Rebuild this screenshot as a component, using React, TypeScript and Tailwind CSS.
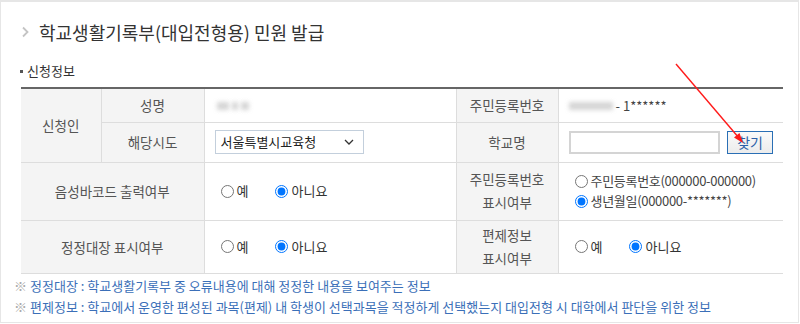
import React from 'react';

const labelCls = 'bg-[#f4f4f4] border border-[#dddddd] text-center text-[#555] font-normal text-[13.5px]';
const valueCls = 'border border-[#dddddd] text-left px-[10px] text-[#333]';

const Radio: React.FC<{ name: string; label: string; checked?: boolean }> = ({ name, label, checked }) => (
  <label className="inline-flex items-center gap-[3px]">
    <input type="radio" name={name} defaultChecked={checked} className="m-0 w-[13px] h-[13px] accent-[#0075ff]" />
    <span>{label}</span>
  </label>
);

const YesNo: React.FC<{ name: string }> = ({ name }) => (
  <div className="flex items-center gap-[27px] pl-[6px]">
    <Radio name={name} label="예" />
    <Radio name={name} label="아니요" checked />
  </div>
);

const Blur: React.FC<{ w: number }> = ({ w }) => (
  <span className="inline-block h-[8px] bg-[#c4c4c4] blur-[2px] align-middle opacity-70" style={{ width: w }} />
);

export default function App() {
  return (
    <div
      className="relative w-[799px] h-[323px] bg-white border border-[#e6e6e6] border-t-2 overflow-hidden"
      style={{ fontFamily: '"Noto Sans CJK KR", "Noto Sans", sans-serif' }}
    >
      <div className="flex items-center pl-[20px] pt-[19px]">
        <svg width="9" height="12" viewBox="0 0 9 12" className="mr-[9px]">
          <path d="M2 1.5 L6.5 6 L2 10.5" fill="none" stroke="#c4c4c4" strokeWidth="1.8" />
        </svg>
        <h1 className="text-[18px] leading-[22px] text-[#333]">학교생활기록부(대입전형용) 민원 발급</h1>
      </div>

      <div className="flex items-center pl-[19px] mt-[20px] text-[13px] leading-[16px] text-[#333]">
        <span className="inline-block w-[3px] h-[3px] bg-[#555] mr-[4px]" />
        신청정보
      </div>

      <table className="ml-[20px] mt-[8px] w-[762px] border-collapse table-fixed text-[13px] leading-[18px] border-t-2 border-t-[#666]">
        <colgroup>
          <col className="w-[80px]" />
          <col className="w-[103px]" />
          <col className="w-[252px]" />
          <col className="w-[102px]" />
          <col className="w-[225px]" />
        </colgroup>
        <tbody>
          <tr className="h-[34px]">
            <th rowSpan={2} className={`${labelCls} border-l-0`}>신청인</th>
            <th className={labelCls}>성명</th>
            <td className={valueCls}>
              <span className="inline-flex gap-[3px] items-center pl-[2px]">
                <Blur w={12} />
                <Blur w={6} />
                <Blur w={8} />
              </span>
            </td>
            <th className={labelCls}>주민등록번호</th>
            <td className={`${valueCls} border-r-0`}>
              <span className="inline-flex items-center">
                <Blur w={44} />
                <span className="ml-[3px] text-[#444]">- 1******</span>
              </span>
            </td>
          </tr>
          <tr className="h-[40px]">
            <th className={labelCls}>해당시도</th>
            <td className={valueCls}>
              <div className="relative w-[149px] h-[24px]">
                <select className="appearance-none w-full h-full border border-[#c3cfdc] bg-white pl-[5px] text-[13px] text-[#222] outline-none">
                  <option>서울특별시교육청</option>
                </select>
                <svg width="10" height="6" viewBox="0 0 10 6" className="absolute right-[10px] top-[9px] pointer-events-none">
                  <path d="M1 1 L5 5 L9 1" fill="none" stroke="#333" strokeWidth="1.3" />
                </svg>
              </div>
            </td>
            <th className={labelCls}>학교명</th>
            <td className={`${valueCls} border-r-0`}>
              <div className="flex items-center gap-[7px]">
                <input type="text" className="w-[155px] h-[23px] border-2 border-[#d4d4d4] bg-white outline-none" />
                <button className="w-[47px] h-[23px] border border-[#2a6fb5] bg-gradient-to-b from-[#fafafa] to-[#ececec] text-[14px] text-[#2a5fa8] leading-none">
                  찾기
                </button>
              </div>
            </td>
          </tr>
          <tr className="h-[58px]">
            <th colSpan={2} className={`${labelCls} border-l-0`}>음성바코드 출력여부</th>
            <td className={valueCls}>
              <YesNo name="barcode" />
            </td>
            <th className={`${labelCls} leading-[23px]`}>
              주민등록번호
              <br />
              표시여부
            </th>
            <td className={`${valueCls} border-r-0`}>
              <div className="flex flex-col gap-[2px] pl-[6px] text-[#444] tracking-[-0.3px]">
                <Radio name="rrn" label="주민등록번호(000000-000000)" />
                <Radio name="rrn" label="생년월일(000000-*******)" checked />
              </div>
            </td>
          </tr>
          <tr className="h-[53px]">
            <th colSpan={2} className={`${labelCls} border-l-0`}>정정대장 표시여부</th>
            <td className={valueCls}>
              <YesNo name="fix" />
            </td>
            <th className={`${labelCls} leading-[23px]`}>
              편제정보
              <br />
              표시여부
            </th>
            <td className={`${valueCls} border-r-0`}>
              <div className="flex items-center gap-[27px] pl-[6px]">
                <Radio name="course" label="예" />
                <Radio name="course" label="아니요" checked />
              </div>
            </td>
          </tr>
        </tbody>
      </table>

      <div className="pl-[13px] mt-[1px] text-[13px] leading-[21px] text-[#3b6fb8]">
        <p>
          <span className="text-[#aaa] mr-[3px]">※</span>정정대장 : 학교생활기록부 중 오류내용에 대해 정정한 내용을 보여주는 정보
        </p>
        <p>
          <span className="text-[#aaa] mr-[3px]">※</span>편제정보 : 학교에서 운영한 편성된 과목(편제) 내 학생이 선택과목을 적정하게 선택했는지 대입전형 시 대학에서 판단을 위한 정보
        </p>
      </div>

      <svg className="absolute left-0 top-0 pointer-events-none" width="800" height="324">
        <line x1="675" y1="62" x2="738" y2="136" stroke="#ff1a1a" strokeWidth="1.4" />
        <path d="M742 141 L733 135.5 L738.5 131 Z" fill="#ff1a1a" />
      </svg>
    </div>
  );
}
